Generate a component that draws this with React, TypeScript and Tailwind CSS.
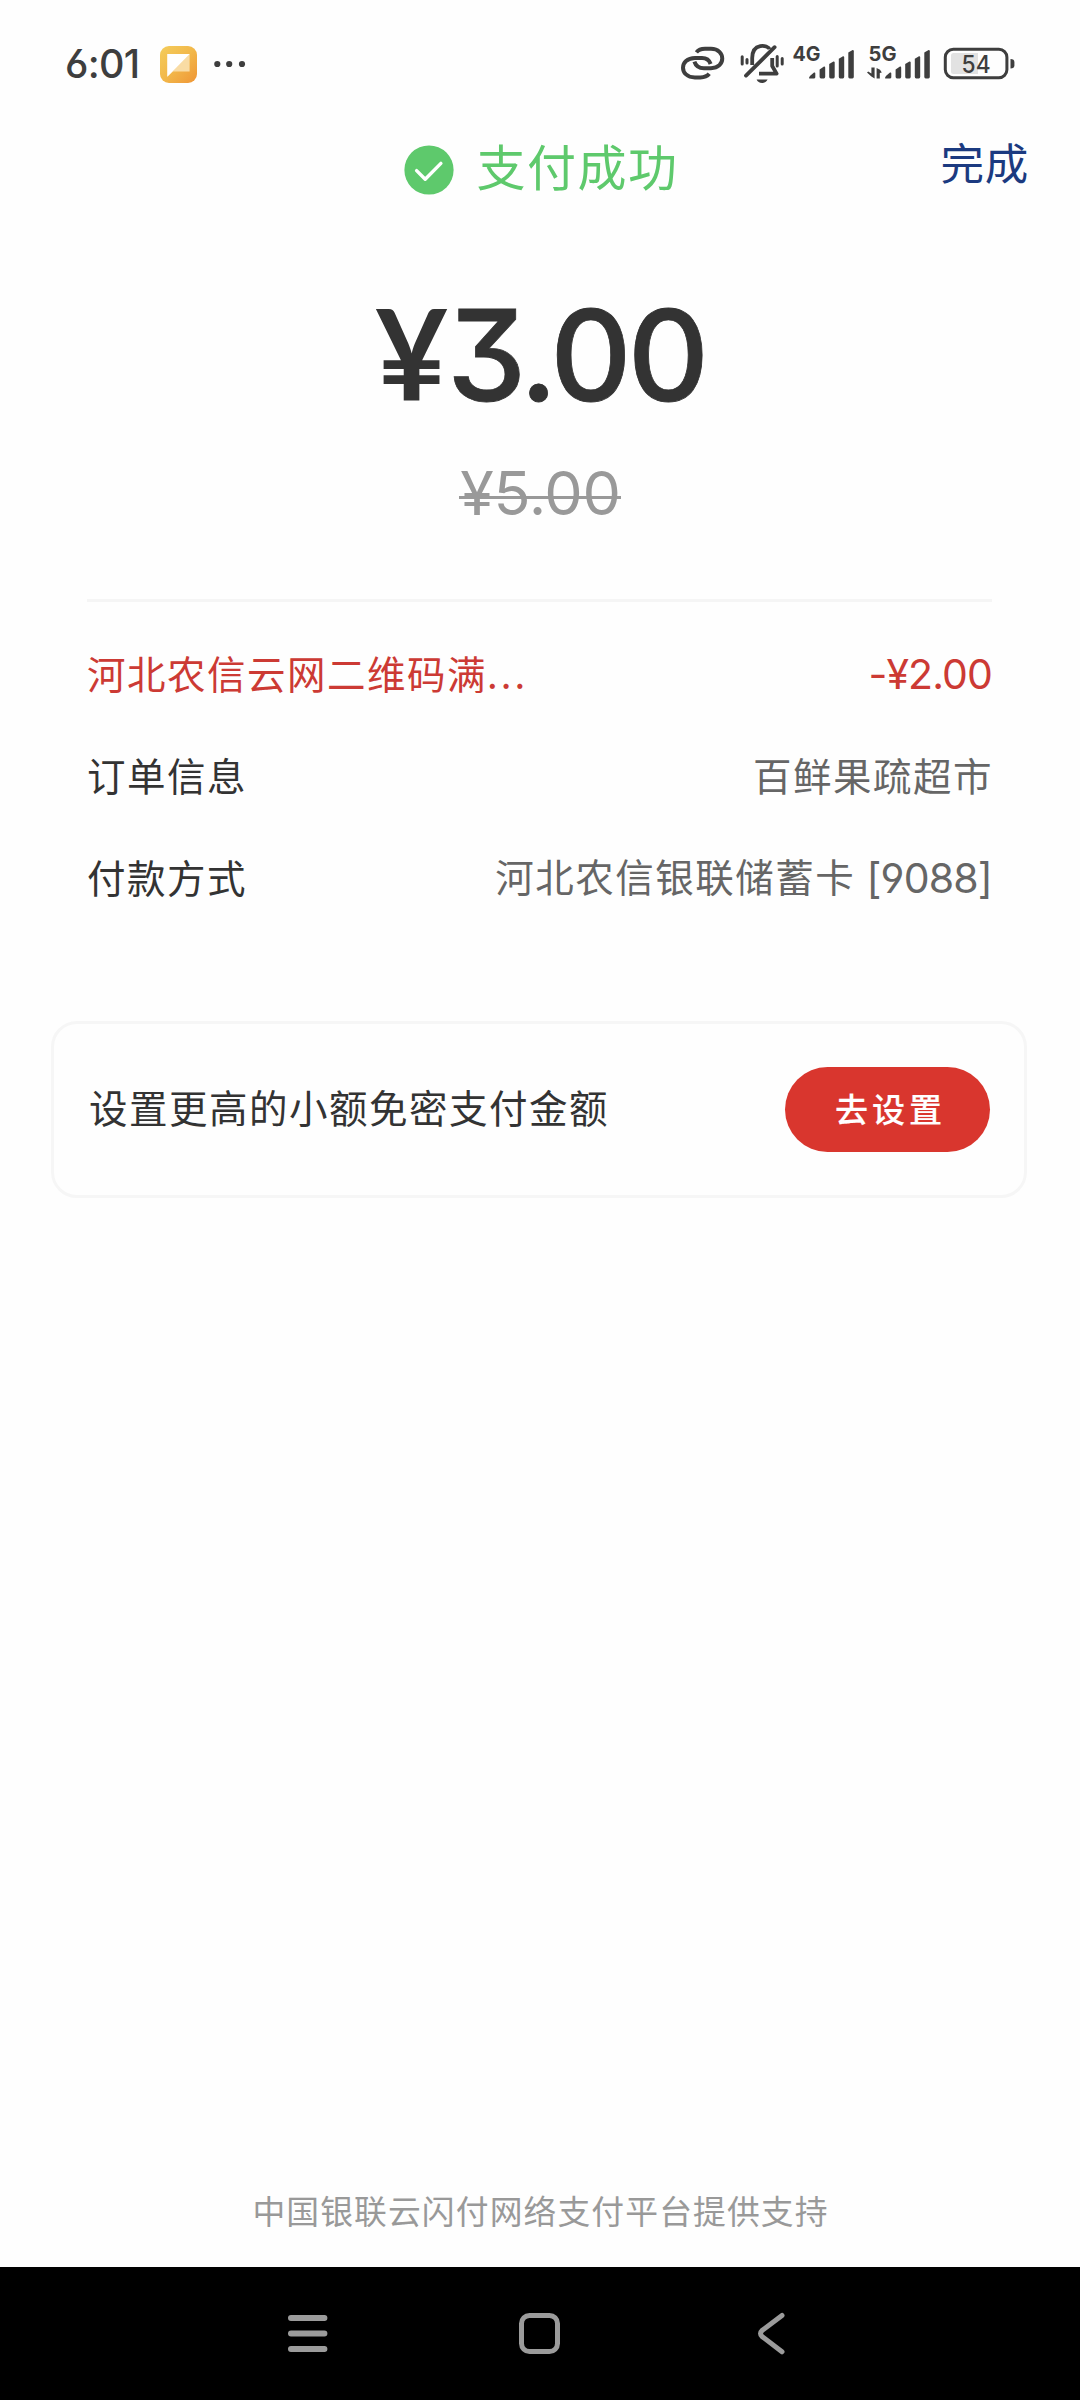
import type { ReactNode } from 'react';

const INK = '#3e3e3e';

function SignalBars() {
  return (
    <>
      <path d="M0 32.5 Q0 31 1.2 30 L5 26.8 Q6.3 26.2 6.3 27.8 V31.5 Q6.3 32.6 5.2 32.6 H0.6 Z" />
      <path d="M10.6 23.6 L15 20.8 Q16.2 20.6 16.2 22 V31 Q16.2 32.6 14.8 32.6 H12 Q10.6 32.6 10.6 31 Z" />
      <path d="M20.2 18.2 L24.4 15.6 Q25.7 15.4 25.7 16.8 V31 Q25.7 32.6 24.3 32.6 H21.6 Q20.2 32.6 20.2 31 Z" />
      <path d="M29.8 13 L34 10.4 Q35.2 10.2 35.2 11.6 V31 Q35.2 32.6 33.8 32.6 H31.2 Q29.8 32.6 29.8 31 Z" />
      <path d="M39.3 6.8 L43.6 4.2 Q44.8 4 44.8 5.4 V31 Q44.8 32.6 43.4 32.6 H40.7 Q39.3 32.6 39.3 31 Z" />
    </>
  );
}

function StatusBar() {
  return (
    <div className="flex h-[128px] w-full shrink-0 items-start pl-[65px] pt-[40px] text-[#3e3e3e]">
      <div className="w-[95px] whitespace-nowrap font-['Inter',sans-serif] text-[39.5px] font-medium leading-[49px] tracking-[-0.7px] [font-feature-settings:'ss01']">
        6:01
      </div>
      <svg className="mt-[6px] h-[37px] w-[37px]" viewBox="0 0 37 37">
        <defs>
          <linearGradient id="note" x1="0" y1="0" x2="1" y2="1">
            <stop offset="0" stopColor="#f4cd5c" />
            <stop offset="0.5" stopColor="#f2b84a" />
            <stop offset="1" stopColor="#ef9535" />
          </linearGradient>
        </defs>
        <rect width="37" height="37" rx="9" fill="url(#note)" />
        <path d="M7.3 8 H29.6 V25.5 H13 L7.3 30.8 Z" fill="#f9dca4" />
        <path d="M7.3 8 H29.6 L7.3 30.8 Z" fill="#fff" />
      </svg>
      <svg className="ml-[17px] mt-[20px] h-[8px] w-[32px]" viewBox="0 0 32 8" fill={INK}>
        <circle cx="3.3" cy="4" r="3.1" />
        <circle cx="15.2" cy="4" r="3.1" />
        <circle cx="28" cy="4" r="3.1" />
      </svg>
      <svg className="ml-[414px] h-[46px] w-[370px] font-['Inter',sans-serif]" viewBox="0 10 370 46" fill={INK}>
        <g fill="none" stroke={INK} strokeWidth="4" strokeLinecap="butt">
          <path d="M36.4 22.4 C38.4 19.8 41.4 18.8 45 18.8 H51 C66 18.8 66 38.2 51 38.2 H44 C39 38.2 35.8 36 34.4 31.6" />
          <path d="M50.6 34 C49.4 30.4 46.4 28 42 28 H35 C19 28 19 47.4 35 47.4 H40.4 C44.4 47.4 47.2 46.4 49.2 43.8" />
        </g>
        <g fill="none" stroke={INK} strokeWidth="3.8" strokeLinecap="round" strokeLinejoin="round">
          <path d="M92.2 35 V28 C92.2 12.4 108 14.6 109.6 19.2" strokeLinecap="butt" />
          <path d="M112.2 28 V36 L116.6 43.6 H99" strokeLinecap="butt" />
          <path d="M86 45.6 L114.6 17.2" />
          <path d="M82.2 26.8 V34 M87 29.4 V33" strokeWidth="3" />
          <path d="M117.2 26.4 V36 M122.2 28.4 V34" strokeWidth="3" />
        </g>
        <path d="M96.6 49.6 H107.6 Q106 53 102.1 53 Q98 53 96.6 49.6 Z" />
        <text x="132.5" y="30.8" fontSize="20" fontWeight="700" textLength="28" lengthAdjust="spacingAndGlyphs">4G</text>
        <g transform="translate(149 15.8)"><SignalBars /></g>
        <text x="208.5" y="30.8" fontSize="20" fontWeight="700" textLength="28" lengthAdjust="spacingAndGlyphs">5G</text>
        <path d="M211.4 37.6 H214.6 V48.4 L211.4 46.6 L207 42.6 L208.2 41.4 L211.4 43.4 Z M216.6 38 L220 39.8 L221.8 42.6 L219.8 43 V48.4 H216.6 Z" />
        <g transform="translate(225 15.8)"><SignalBars /></g>
        <rect x="285.3" y="19.3" width="61.6" height="28.4" rx="8" fill="none" stroke={INK} strokeWidth="3" />
        <path d="M291 25.5 Q291 23 293.5 23 H318 V44 H293.5 Q291 44 291 41.5 Z" fill="#e2e2e2" />
        <path d="M350.5 29 Q354.4 29 354.4 32 V35.4 Q354.4 38.4 350.5 38.4 Z" />
        <text x="301.6" y="42.8" fontSize="24.5" fontWeight="500" textLength="29" lengthAdjust="spacingAndGlyphs">54</text>
      </svg>
    </div>
  );
}

function Row({ label, children, red = false }: { label: ReactNode; children: ReactNode; red?: boolean }) {
  return (
    <div className="flex h-[102px] items-center justify-between whitespace-nowrap">
      <span className={red ? 'text-[#cc3a34]' : 'text-[#333]'}>{label}</span>
      <span className={red ? 'text-[#cc3a34]' : 'text-[#666]'}>{children}</span>
    </div>
  );
}

export default function App() {
  return (
    <div className="flex h-[2400px] w-[1080px] flex-col overflow-hidden bg-[#fefefe] font-['Noto_Sans_CJK_SC',sans-serif]">
      <StatusBar />

      <header className="relative flex h-[84px] shrink-0 items-center justify-center pl-[3px]">
        <svg className="h-[50px] w-[50px]" viewBox="0 0 50 50">
          <circle cx="25" cy="25" r="24.6" fill="#5ec96c" />
          <path d="M12.6 25.6 L21.2 34.2 L36.9 18.4" fill="none" stroke="#fff" strokeWidth="3.4" strokeLinecap="round" strokeLinejoin="round" />
        </svg>
        <h1 className="ml-[22px] whitespace-nowrap pb-[10px] text-[49px] leading-[50px] font-normal tracking-[1.5px] text-[#5ec96c]">支付成功</h1>
        <button className="absolute right-[51px] top-[12px] text-[43.5px] leading-[44px] tracking-[0.8px] text-[#1b3a80]">完成</button>
      </header>

      <section className="flex h-[387px] shrink-0 flex-col items-center font-['Inter',sans-serif]">
        <div className="mt-[76px] h-[130px] whitespace-nowrap text-[126px] leading-[130px] font-medium tracking-[-4px] text-[#333] [-webkit-text-stroke:0.8px_#333] [font-feature-settings:'cv09']">
          <span className="font-['Lato',sans-serif] font-bold tracking-[-1px] [-webkit-text-stroke:0]">¥</span>3.00
        </div>
        <div className="relative mt-[43px] h-[64px] whitespace-nowrap pl-px text-[61px] leading-[64px] tracking-[-0.3px] text-[#999]">
          ¥5.00
          <div className="absolute left-0 top-[35px] h-[3px] w-full bg-[#999]" />
        </div>
      </section>

      <section className="mr-[88px] ml-[87px] shrink-0 border-t-[3px] border-[#f5f5f5] pt-[19px] text-[38.5px] leading-[60px] tracking-[1.5px]">
        <Row label={<>河北农信云网二维码满<span className="tracking-[3px]">...</span></>} red>
          <span className="inline-block translate-y-px font-['Inter',sans-serif] text-[41px] tracking-[-0.9px]">-¥2.00</span>
        </Row>
        <Row label="订单信息"><span className="-mr-px">百鲜果疏超市</span></Row>
        <Row label="付款方式">
          河北农信银联储蓄卡{' '}
          <span className="ml-px inline-block translate-y-px font-['Inter',sans-serif] text-[41px] tracking-[-0.8px] [font-feature-settings:'ss01']">[9088]</span>
        </Row>
      </section>

      <section className="ml-[51px] mt-[94px] flex h-[177px] w-[976px] shrink-0 items-center justify-between rounded-[26px] border-[3px] border-[#f6f6f6] px-[34px]">
        <span className="pb-[7px] pl-px text-[38.5px] leading-[60px] tracking-[1.5px] text-[#333]">设置更高的小额免密支付金额</span>
        <button className="flex h-[85px] w-[205px] items-center justify-center rounded-full bg-[#d9362e] pb-[4px] pl-[6px] text-[33px] leading-[40px] font-medium tracking-[4px] text-white [-webkit-text-stroke:0.2px_#fff]">
          去设置
        </button>
      </section>

      <footer className="mt-auto flex h-[110px] shrink-0 items-center justify-center pb-[4px] pl-px text-[32.8px] leading-[40px] tracking-[1.1px] text-[#999]">
        中国银联云闪付网络支付平台提供支持
      </footer>

      <nav className="flex h-[133px] shrink-0 items-start bg-black pl-[287px] pt-[45px]">
        <svg className="h-[42px] w-[41px]" viewBox="0 0 41 42" stroke="#9b9b9b" strokeWidth="6" strokeLinecap="round">
          <path d="M4 6 H37.4 M4 21.5 H37.4 M4 37 H37.4" />
        </svg>
        <svg className="ml-[190px] h-[43px] w-[43px]" viewBox="0 0 43 43" fill="none" stroke="#9b9b9b" strokeWidth="5">
          <rect x="3.5" y="3.5" width="36" height="36" rx="8" />
        </svg>
        <svg className="ml-[195px] h-[44px] w-[32px]" viewBox="0 0 32 44" fill="none" stroke="#9b9b9b" strokeWidth="5" strokeLinecap="round" strokeLinejoin="round">
          <path d="M26 3.5 L6 18.6 Q3 21.5 6 24.4 L26 39.8" />
        </svg>
      </nav>
    </div>
  );
}
